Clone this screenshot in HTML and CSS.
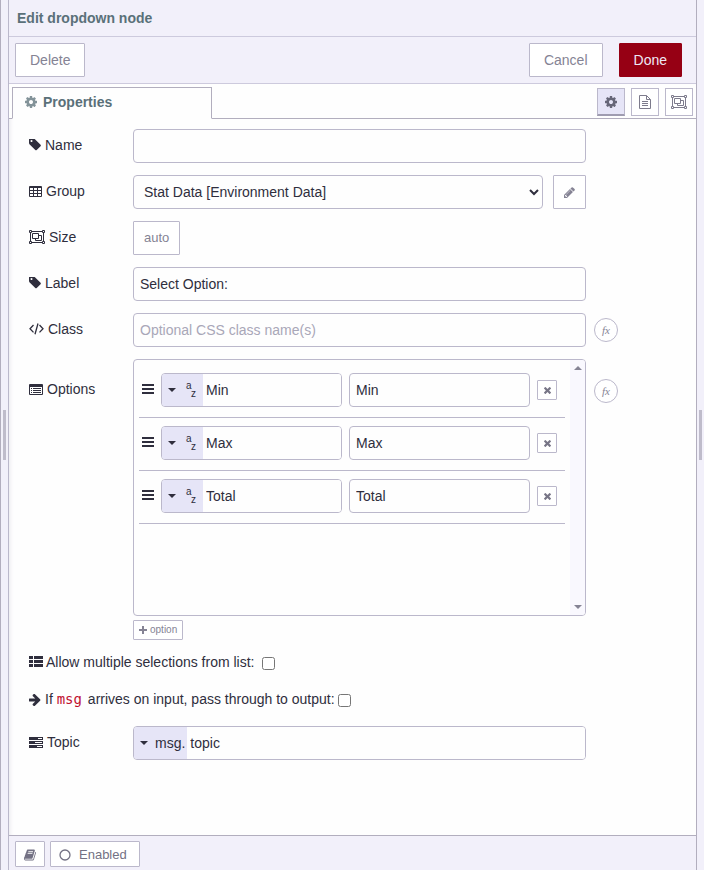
FILE: index.html
```html
<!DOCTYPE html>
<html lang="en">
<head>
<meta charset="utf-8">
<title>Edit dropdown node</title>
<link rel="stylesheet" href="styles.css">
</head>
<body>
<svg class="sprite" aria-hidden="true">
  <symbol id="i-tag" viewBox="128 192 1536 1536"><path d="M576 448q0-53-37.500-90.500t-90.500-37.500-90.500 37.500-37.500 90.500 37.500 90.500 90.500 37.500 90.500-37.500 37.500-90.500zm1067 576q0 53-37 90l-491 492q-39 37-91 37-53 0-90-37l-715-716q-38-37-64.500-101t-26.500-117v-416q0-52 38-90t90-38h416q53 0 117 26.500t102 64.500l715 714q37 39 37 91z"/></symbol>
  <symbol id="i-cog" viewBox="128 128 1536 1536"><path d="M1152 896q0-106-75-181t-181-75-181 75-75 181 75 181 181 75 181-75 75-181zm512-109v222q0 12-8 23t-20 13l-185 28q-19 54-39 91 35 50 107 138 10 12 10 25t-9 23q-27 37-99 108t-94 71q-12 0-26-9l-138-108q-44 23-91 38-16 136-29 186-7 28-36 28h-222q-14 0-24.500-8.500t-11.500-21.500l-28-184q-49-16-90-37l-141 107q-10 9-25 9-14 0-25-11-126-114-165-168-7-10-7-23 0-12 8-23 15-21 51-66.500t54-70.500q-27-50-41-99l-183-27q-13-2-21-12.500t-8-23.500v-222q0-12 8-23t19-13l186-28q14-46 39-92-40-57-107-138-10-12-10-24 0-10 9-23 26-36 98.500-107.500t94.500-71.500q13 0 26 10l138 107q44-23 91-38 16-136 29-186 7-28 36-28h222q14 0 24.500 8.500t11.500 21.500l28 184q49 16 90 37l142-107q9-9 24-9 13 0 25 10 129 119 165 170 7 8 7 22 0 12-8 23-15 21-51 66.500t-54 70.500q26 50 41 98l183 28q13 2 21 12.500t8 23.500z"/></symbol>
  <symbol id="i-pencil" viewBox="128 128 1536 1536"><path d="M491 1536l91-91-235-235-91 91v107h128v128h107zm523-928q0-22-22-22-10 0-17 7l-542 542q-7 7-7 17 0 22 22 22 10 0 17-7l542-542q7-7 7-17zm-54-192l416 416-832 832h-416v-416zm683 96q0 53-37 90l-166 166-416-416 166-165q36-38 90-38 53 0 91 38l235 234q37 39 37 91z"/></symbol>
  <symbol id="i-book" viewBox="64 64 1664 1664"><path d="M1703 478q40 57 18 129l-275 906q-19 64-76.500 107.500t-122.500 43.500h-923q-77 0-148.500-53.500t-99.500-131.500q-24-67-2-127 0-4 3-27t4-37q1-8-3-21.500t-3-19.500q2-11 8-21t16.500-23.500 16.500-23.500q23-38 45-91.500t30-91.500q3-10 .5-30t-.5-28q3-11 17-28t17-23q21-36 42-92t25-90q1-9-2.500-32t.5-28q4-13 22-30.500t22-22.500q19-26 42.500-84.500t27.500-96.500q1-8-3-25.500t-2-26.500q2-8 9-18t18-23 17-21q8-12 16.500-30.500t15-35 16-36 19.500-32 26.500-23.500 36-11.500 47.500 5.500l-1 3q38-9 51-9h761q74 0 114 56t18 130l-274 906q-36 119-71.500 153.500t-128.500 34.500h-869q-27 0-38 15-11 16-1 43 24 70 144 70h923q29 0 56-15.500t35-41.500l300-987q7-22 5-57 38 15 59 43zm-1064 2q-4 13 2 22.500t20 9.500h608q13 0 25.500-9.500t16.500-22.500l21-64q4-13-2-22.500t-20-9.500h-608q-13 0-25.500 9.500t-16.500 22.500zm-83 256q-4 13 2 22.500t20 9.500h608q13 0 25.500-9.500t16.500-22.500l21-64q4-13-2-22.500t-20-9.500h-608q-13 0-25.500 9.500t-16.500 22.500z"/></symbol>
  <symbol id="i-arrow" viewBox="160 200 1520 1520"><path d="M1600 960q0 54-37 91l-651 651q-39 37-91 37-51 0-90-37l-75-75q-38-38-38-91t38-91l293-293h-704q-52 0-84.500-37.500t-32.500-90.500v-128q0-53 32.500-90.500t84.500-37.500h704l-293-294q-38-36-38-90t38-90l75-75q38-38 90-38 53 0 91 38l651 651q37 35 37 90z"/></symbol>
  <symbol id="i-remove" viewBox="302 366 1188 1188"><path d="M1490 1322q0 40-28 68l-136 136q-28 28-68 28t-68-28l-294-294-294 294q-28 28-68 28t-68-28l-136-136q-28-28-28-68t28-68l294-294-294-294q-28-28-28-68t28-68l136-136q28-28 68-28t68 28l294 294 294-294q28-28 68-28t68 28l136 136q28 28 28 68t-28 68l-294 294 294 294q28 28 28 68z"/></symbol>
  <symbol id="i-table" viewBox="0 0 13 11"><path fill-rule="evenodd" d="M1 0h11q1 0 1 1v9q0 1-1 1H1q-1 0-1-1V1Q0 0 1 0zM1 2v2h3V2zM5 2v2h3V2zM9 2v2h3V2zM1 5v2h3V5zM5 5v2h3V5zM9 5v2h3V5zM1 8v2h3V8zM5 8v2h3V8zM9 8v2h3V8z"/></symbol>
  <symbol id="i-group" viewBox="0 0 16 14"><g fill="none" stroke="currentColor"><path d="M3 1.500h10M3 12.500h10M1.500 3v8M14.500 3v8M.5.5h2v2h-2zM13.500.5h2v2h-2zM.5 11.500h2v2h-2zM13.500 11.500h2v2h-2zM3.500 3.500h6v5h-6zM10 5.500h2.500v5h-6V9"/></g></symbol>
  <symbol id="i-code" viewBox="0 0 15 12"><path fill="none" stroke="currentColor" stroke-width="1.300" d="M4.500 2L1 5.700l3.500 3.700M10.500 2L14 5.700l-3.500 3.700M9 .5L6 11.200"/></symbol>
  <symbol id="i-listalt" viewBox="0 0 14 11"><path fill-rule="evenodd" d="M1 0h12q1 0 1 1v9q0 1-1 1H1q-1 0-1-1V1Q0 0 1 0zM1 3v7h12V3zM2 4h1v1H2zM4 4h8v1H4zM2 6h1v1H2zM4 6h8v1H4zM2 8h1v1H2zM4 8h8v1H4z"/></symbol>
  <symbol id="i-thlist" viewBox="0 0 14 11"><path d="M0 0h4v3H0zM5 0h9v3H5zM0 4h4v3H0zM5 4h9v3H5zM0 8h4v3H0zM5 8h9v3H5z"/></symbol>
  <symbol id="i-tasks" viewBox="0 0 14 11"><path fill-rule="evenodd" d="M0 0h14v3H0zM9 1v1h4V1zM0 4h14v3H0zM6 5v1h7V5zM0 8h14v3H0zM8 9v1h5V9z"/></symbol>
  <symbol id="i-file" viewBox="0 0 12 14"><path fill="none" stroke="currentColor" d="M.5.500h7l4 4v9H.5zM7.500.5v4h4M3 6.500h6M3 8.500h6M3 10.500h6"/></symbol>
  <symbol id="i-bars" viewBox="0 0 12 10"><path d="M0 0h12v2H0zM0 4h12v2H0zM0 8h12v2H0z"/></symbol>
  <symbol id="i-plus" viewBox="0 0 8 8"><path d="M3 0h2v3h3v2H5v3H3V5H0V3h3z"/></symbol>
  <symbol id="i-down" viewBox="0 0 8 4"><path d="M0 0h8L4 4z"/></symbol>
  <symbol id="i-up" viewBox="0 0 8 4"><path d="M4 0l4 4H0z"/></symbol>
  <symbol id="i-circle" viewBox="0 0 12 12"><circle cx="6" cy="6" r="5" fill="none" stroke="currentColor" stroke-width="1.300"/></symbol>
</svg>

<div class="app">
  <div class="gutter gutter-left"><span class="grip"></span></div>
  <main class="panel">
    <header class="title">Edit dropdown node</header>
    <div class="toolbar">
      <button class="btn" type="button">Delete</button>
      <span class="spacer"></span>
      <button class="btn" type="button">Cancel</button>
      <button class="btn btn-primary" type="button">Done</button>
    </div>
    <div class="tabs">
      <a class="tab" href="#properties"><svg class="icon s12"><use href="#i-cog"/></svg>Properties</a>
      <span class="spacer"></span>
      <div class="tab-buttons">
        <button class="tab-btn active" type="button" aria-label="Properties"><svg class="icon s12"><use href="#i-cog"/></svg></button>
        <button class="tab-btn" type="button" aria-label="Description"><svg class="icon w12"><use href="#i-file"/></svg></button>
        <button class="tab-btn" type="button" aria-label="Appearance"><svg class="icon w16"><use href="#i-group"/></svg></button>
      </div>
    </div>

    <form class="form" id="properties">
      <div class="row">
        <label class="label" for="name"><svg class="icon s12"><use href="#i-tag"/></svg>Name</label>
        <input class="input" id="name" type="text">
      </div>
      <div class="row">
        <label class="label" for="group"><svg class="icon w13"><use href="#i-table"/></svg>Group</label>
        <div class="with-button">
          <select class="input select" id="group"><option>Stat Data [Environment Data]</option></select>
          <button class="btn btn-square" type="button" aria-label="Edit group"><svg class="icon s11"><use href="#i-pencil"/></svg></button>
        </div>
      </div>
      <div class="row">
        <label class="label" for="size"><svg class="icon w16"><use href="#i-group"/></svg>Size</label>
        <button class="btn btn-size" id="size" type="button">auto</button>
      </div>
      <div class="row">
        <label class="label" for="label"><svg class="icon s12"><use href="#i-tag"/></svg>Label</label>
        <input class="input" id="label" type="text" value="Select Option:">
      </div>
      <div class="row">
        <label class="label" for="class"><svg class="icon w15"><use href="#i-code"/></svg>Class</label>
        <input class="input" id="class" type="text" placeholder="Optional CSS class name(s)">
        <button class="fx" type="button">fx</button>
      </div>
      <div class="row row-options">
        <span class="label" id="options-label"><svg class="icon w14"><use href="#i-listalt"/></svg>Options</span>
        <div class="options">
          <div class="listbox">
            <ol class="list" aria-labelledby="options-label">
              <li class="item">
                <svg class="icon handle"><use href="#i-bars"/></svg>
                <div class="typed">
                  <button class="type" type="button" aria-label="String"><svg class="icon caret"><use href="#i-down"/></svg><span class="az"><span>a</span><span class="z">z</span></span></button>
                  <input class="typed-input" type="text" aria-label="Value" value="Min">
                </div>
                <input class="input" type="text" aria-label="Label" value="Min">
                <button class="remove" type="button" aria-label="Remove"><svg class="icon s7"><use href="#i-remove"/></svg></button>
              </li>
              <li class="item">
                <svg class="icon handle"><use href="#i-bars"/></svg>
                <div class="typed">
                  <button class="type" type="button" aria-label="String"><svg class="icon caret"><use href="#i-down"/></svg><span class="az"><span>a</span><span class="z">z</span></span></button>
                  <input class="typed-input" type="text" aria-label="Value" value="Max">
                </div>
                <input class="input" type="text" aria-label="Label" value="Max">
                <button class="remove" type="button" aria-label="Remove"><svg class="icon s7"><use href="#i-remove"/></svg></button>
              </li>
              <li class="item">
                <svg class="icon handle"><use href="#i-bars"/></svg>
                <div class="typed">
                  <button class="type" type="button" aria-label="String"><svg class="icon caret"><use href="#i-down"/></svg><span class="az"><span>a</span><span class="z">z</span></span></button>
                  <input class="typed-input" type="text" aria-label="Value" value="Total">
                </div>
                <input class="input" type="text" aria-label="Label" value="Total">
                <button class="remove" type="button" aria-label="Remove"><svg class="icon s7"><use href="#i-remove"/></svg></button>
              </li>
            </ol>
            <div class="scrollbar" aria-hidden="true">
              <svg class="icon caret"><use href="#i-up"/></svg>
              <svg class="icon caret"><use href="#i-down"/></svg>
            </div>
          </div>
          <button class="add" type="button"><svg class="icon w8"><use href="#i-plus"/></svg>option</button>
        </div>
        <button class="fx" type="button">fx</button>
      </div>
      <div class="check check-wide">
        <label for="multi"><svg class="icon w14"><use href="#i-thlist"/></svg>Allow multiple selections from list:</label>
        <input class="checkbox" id="multi" type="checkbox">
      </div>
      <div class="check">
        <label for="pass"><svg class="icon s12"><use href="#i-arrow"/></svg>If <code class="code">msg</code> arrives on input, pass through to output:</label>
        <input class="checkbox" id="pass" type="checkbox">
      </div>
      <div class="row">
        <label class="label" for="topic"><svg class="icon w14"><use href="#i-tasks"/></svg>Topic</label>
        <div class="typed">
          <button class="type" type="button"><svg class="icon caret"><use href="#i-down"/></svg>msg.</button>
          <input class="typed-input" id="topic" type="text" value="topic">
        </div>
      </div>
    </form>

    <footer class="footer">
      <button class="foot-btn" type="button" aria-label="Help"><svg class="icon s12"><use href="#i-book"/></svg></button>
      <button class="foot-btn foot-state" type="button"><svg class="icon s12"><use href="#i-circle"/></svg>Enabled</button>
    </footer>
  </main>
  <div class="gutter gutter-right"><span class="grip"></span></div>
</div>
</body>
</html>
```
FILE: styles.css
```css
:root {
  --chrome: #f2f0fa;
  --line: #bbb8cb;
  --line-dark: #b2aebe;
  --text: #2f2e3d;
  --muted: #858394;
  --accent: #e6e5f7;
}

* { box-sizing: border-box; }

body {
  margin: 0;
  background: var(--chrome);
  color: var(--text);
  font: 14px/20px "Liberation Sans", Arial, sans-serif;
}

button, input, select { margin: 0; font: inherit; color: inherit; }
button { cursor: pointer; }

.sprite { display: none; }

.icon {
  flex: none;
  display: inline-block;
  fill: currentColor;
}
.s7 { width: 7px; height: 7px; }
.s11 { width: 11px; height: 11px; }
.s12 { width: 12px; height: 12px; }
.w8 { width: 8px; height: 8px; }
.w12 { width: 12px; height: 14px; }
.w13 { width: 13px; height: 11px; }
.w14 { width: 14px; height: 11px; }
.w15 { width: 15px; height: 12px; }
.w16 { width: 16px; height: 14px; }
.caret { width: 8px; height: 4px; }

.app { display: flex; min-height: 100vh; }

.gutter {
  flex: none;
  display: flex;
  align-items: center;
  justify-content: center;
  background: var(--chrome);
}
.gutter-left {
  width: 9px;
  border-left: 1px solid var(--line-dark);
  border-right: 1px solid var(--line);
}
.gutter-right {
  width: 8px;
  border-left: 1px solid var(--line-dark);
}
.grip { width: 3px; height: 50px; background: #bfbccb; }

.panel {
  flex: 1;
  min-width: 0;
  display: flex;
  flex-direction: column;
  background: #fefefe;
}

.title {
  height: 37px;
  padding: 0 8px;
  border-bottom: 1px solid #cdcadd;
  background: var(--chrome);
  color: #5a7079;
  font-weight: bold;
  line-height: 36px;
}

.spacer { flex: 1; }

.toolbar {
  display: flex;
  align-items: center;
  height: 47px;
  padding: 0 14px 0 6px;
  border-bottom: 1px solid #cdcadd;
  background: var(--chrome);
}

.btn {
  height: 34px;
  padding: 0 14px;
  border: 1px solid var(--line);
  border-radius: 1px;
  background: #fff;
  color: var(--muted);
}
.btn-primary {
  margin-left: 16px;
  border-color: #960014;
  background: #960014;
  color: #eee8f4;
}

.tabs {
  display: flex;
  align-items: flex-end;
  height: 35px;
  padding: 0 3px;
  box-shadow: inset 0 -1px var(--line-dark);
}
.tab {
  display: flex;
  align-items: center;
  gap: 6px;
  width: 200px;
  height: 32px;
  padding: 0 12px 2px;
  border: 1px solid var(--line-dark);
  border-bottom-color: #fefefe;
  background: #fefefe;
  color: #5a7079;
  font-weight: bold;
  text-decoration: none;
}
.tab .icon { color: #839399; }
.tab-buttons { display: flex; gap: 6px; padding-bottom: 3px; }
.tab-btn {
  display: flex;
  align-items: center;
  justify-content: center;
  width: 28px;
  height: 28px;
  padding: 0;
  border: 1px solid var(--line);
  background: #fff;
  color: #7d7b8c;
}
.tab-btn.active {
  border-bottom: 2px solid #9f9cb0;
  background: var(--accent);
  color: #666678;
}

.form {
  flex: 1;
  display: flex;
  flex-direction: column;
  gap: 12px;
  padding: 10px 86px 20px 20px;
  box-shadow: inset 5px 0 4px -4px #e9e8ef;
}

.row {
  display: grid;
  grid-template-columns: 104px minmax(0, 1fr) 24px;
  align-items: center;
}
.row > .fx { margin-left: 8px; }

.label {
  display: flex;
  align-items: center;
  gap: 4px;
  height: 34px;
  padding-bottom: 2px;
}

.input {
  width: 100%;
  min-width: 0;
  height: 34px;
  padding: 0 6px;
  border: 1px solid var(--line);
  border-radius: 4px;
  background: #fefefe;
}
.input::placeholder { color: #a9a7b8; }

.with-button { display: flex; gap: 10px; }
.select { flex: 1; }
.btn-square {
  display: flex;
  align-items: center;
  justify-content: center;
  width: 33px;
  padding: 0;
}
.btn-size { justify-self: start; padding: 0 10px; font-size: 13px; }

.fx {
  width: 24px;
  height: 24px;
  padding: 0;
  border: 1px solid var(--line);
  border-radius: 50%;
  background: #fff;
  color: var(--muted);
  font: italic 11px/20px "Liberation Serif", serif;
}

.row-options { align-items: start; }
.row-options > .label { margin-top: 14px; }
.row-options > .fx { margin-top: 20px; }

.options {
  display: flex;
  flex-direction: column;
  align-items: flex-start;
  gap: 4px;
}
.listbox {
  display: flex;
  width: 100%;
  min-height: 257px;
  border: 1px solid var(--line);
  border-radius: 4px;
  overflow: hidden;
}
.list {
  flex: 1;
  min-width: 0;
  margin: 0;
  padding: 5px;
  list-style: none;
}
.item {
  display: grid;
  grid-template-columns: 12px minmax(0, 1fr) minmax(0, 1fr) 20px;
  align-items: center;
  gap: 7px;
  padding: 8px 8px 10px 3px;
  border-bottom: 1px solid var(--line);
}
.handle { width: 12px; height: 10px; margin-bottom: 2px; }
.remove {
  display: flex;
  align-items: center;
  justify-content: center;
  width: 20px;
  height: 20px;
  padding: 0;
  border: 1px solid var(--line);
  border-radius: 1px;
  background: #fff;
  color: #777586;
}
.scrollbar {
  display: flex;
  flex-direction: column;
  justify-content: space-between;
  align-items: center;
  width: 15px;
  padding: 6px 0;
  background: #f9f8fe;
  color: #858394;
}

.typed {
  display: flex;
  min-width: 0;
  height: 34px;
  border: 1px solid var(--line);
  border-radius: 4px;
  overflow: hidden;
}
.type {
  display: flex;
  flex: none;
  align-items: center;
  gap: 7px;
  padding: 0 2px 0 6px;
  border: 0;
  background: var(--accent);
}
.typed-input {
  flex: 1;
  min-width: 0;
  padding: 0 3px;
  border: 0;
  background: #fefefe;
}
.az {
  display: flex;
  width: 18px;
  padding: 0 5px 0 3px;
  font-size: 10px;
  line-height: 8px;
}
.az span { flex: none; width: 5px; padding-bottom: 8px; }
.az .z { padding: 8px 0 0; }

.add {
  display: flex;
  align-items: center;
  gap: 3px;
  height: 20px;
  padding: 0 5px;
  border: 1px solid var(--line);
  border-radius: 1px;
  background: #fff;
  color: var(--muted);
  font-size: 10px;
}

.check { display: flex; gap: 3px; height: 25px; }
.check-wide { gap: 7px; }
.check label .icon { margin-right: 4px; vertical-align: -2px; }
.check-wide label .icon { margin-right: 3px; vertical-align: 0; }
.checkbox { width: 13px; height: 13px; margin-top: 5px; }
.code {
  padding-right: 2px;
  color: #c0102f;
  font: 14px/20px "DejaVu Sans Mono", monospace;
}

.footer {
  display: flex;
  gap: 5px;
  height: 35px;
  padding: 5px 6px 0;
  border-top: 1px solid var(--line-dark);
  background: var(--chrome);
}
.foot-btn {
  display: flex;
  align-items: center;
  gap: 8px;
  height: 26px;
  padding: 1px 8px 0;
  border: 1px solid var(--line);
  border-radius: 1px;
  background: #fff;
  color: #737184;
  font-size: 13px;
}
.foot-state { padding-right: 12px; }
```
